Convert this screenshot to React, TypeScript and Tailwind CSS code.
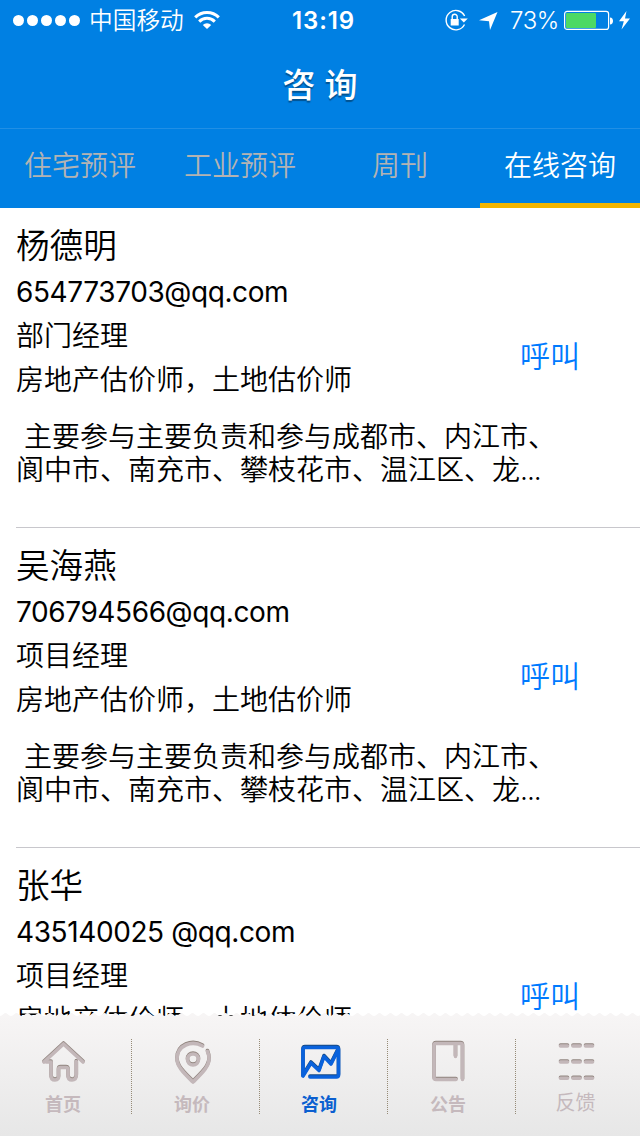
import React from 'react'

const tabs = ["住宅预评", "工业预评", "周刊", "在线咨询"]

const people = [
  {
    name: "杨德明",
    email: "654773703@qq.com",
    job: "部门经理",
    about: [" 主要参与主要负责和参与成都市、内江市、", "阆中市、南充市、攀枝花市、温江区、龙"],
  },
  {
    name: "吴海燕",
    email: "706794566@qq.com",
    job: "项目经理",
    about: [" 主要参与主要负责和参与成都市、内江市、", "阆中市、南充市、攀枝花市、温江区、龙"],
  },
  { name: "张华", email: "435140025 @qq.com", job: "项目经理" },
]

const StatusBar = () => {
  return (
    <div className="flex h-10 items-center pl-[13px] text-white">
      <div className="flex gap-[3px]">
        {[1, 2, 3, 4, 5].map((dot) => (
          <span key={dot} className="h-[11px] w-[11px] rounded-full bg-white" />
        ))}
      </div>
      <span className="ml-[9px] w-[97px] pt-[2px] whitespace-nowrap text-[23.7px] leading-10 font-[350]">中国移动</span>
      <svg className="ml-2 h-[20px] w-[26px]" viewBox="0 0 26 20" fill="none" stroke="#fff" strokeWidth="3">
        <path d="M1.2 7.4A16.5 16.5 0 0 1 24.8 7.4" />
        <path d="M5.2 11.6A11 11 0 0 1 20.8 11.6" />
        <path d="M13 19L8.8 14.9A6 6 0 0 1 17.2 14.9Z" fill="#fff" stroke="none" />
      </svg>
      <span className="ml-[72px] w-[70px] pt-0.5 text-[24px] leading-10 font-semibold tracking-[0.9px]">13:19</span>
      <svg className="ml-[82px] h-[24px] w-[26px]" viewBox="0 0 26 24" fill="none" stroke="#fff" strokeWidth="1.4">
        <path d="M20.5 16.5A9.7 9.7 0 1 1 20.6 8" />
        <path d="M15.8 10.5H23.8L19.8 14.5Z" fill="#fff" stroke="none" />
        <rect x="6.7" y="11" width="8" height="6.5" fill="#fff" stroke="none" />
        <path d="M8.2 11V8.7a2.5 2.5 0 0 1 5 0V11" />
      </svg>
      <svg className="mt-px ml-[9px] h-[18px] w-[19px]" viewBox="0 0 19 18" fill="#fff">
        <path d="M18.5 0L11 18L10 9.2L0 8.2Z" />
      </svg>
      <span className="ml-[12px] w-[49px] pt-0.5 text-2xl leading-10 font-[350] tracking-[-0.4px]">73%</span>
      <svg className="ml-[5px] h-[20px] w-[67px]" viewBox="0 0 67 20">
        <rect x="0.6" y="1.4" width="44" height="18" rx="2.5" fill="none" stroke="#fff" strokeWidth="1.2" />
        <rect x="2" y="3" width="30" height="15" rx="1" fill="#4cd964" />
        <path d="M46 7.5c4 0 4 7 0 7z" fill="#fff" />
        <path d="M62.5 1L55 11.2H59.8L57.5 19.5L66 8.6H61Z" fill="#fff" />
      </svg>
    </div>
  )
}

const Icon = ({ index }: { index: number }) => {
  return (
    <svg
      className={index === 2 ? "h-12 w-full drop-shadow-[0_-0.7px_0_#174a83]" : "h-12 w-full drop-shadow-[0_-0.8px_0_#91857f]"}
      viewBox={index === 0 ? "0 0 131 48" : index === 4 ? "4 0 124 48" : "4 0 127 48"}
      fill="none" strokeLinecap="round" strokeLinejoin="round" strokeWidth="3.6"
      stroke={index === 2 ? "#0a62dc" : "#c3b7b9"}>
      {index === 0 && <path d="M44 26L63.5 8L83 26M46 26H51V39.5Q51 44 55 44T58.5 39.5V33.5Q58.5 31.5 60.5 31.5H66Q68 31.5 68 33.5V39.5Q68 44 72 44T76.3 39.5V25.5" />}
      {index === 1 && (
        <>
          <path d="M74.5 10C64 4 49 9 49 23C49 31 57 38 65 46C73 38 81 31 81 23Q81 19 79.5 15.5" />
          <circle cx="65" cy="23.5" r="5.5" />
        </>
      )}
      {index === 2 && <path d="M47 40V13.5Q47 11.5 49 11.5H80.5Q82.5 11.5 82.5 13.5V39Q82.5 41 80.5 41H54M47 40L55 27L63 34.5L68 20.5L75 28L82 14" />}
      {index === 3 && <path d="M72 43.5H52Q50 43.5 50 41.5V9.5Q50 7.5 52 7.5H76.5Q78.5 7.5 78.5 9.5V43.5M71.5 9V20.5" />}
      {index === 4 && <path d="M48.5 10H55.5M61 10H68M73.5 10H80.5M48.5 26H55.5M61 26H68M73.5 26H80.5M48.5 42.3H55.5M61 42.3H68M73.5 42.3H80.5" />}
    </svg>
  )
}

const Footer = () => {
  return (
    <footer className="relative -mt-1 flex h-[124px] shrink-0 flex-col">
      {/* scalloped paper edge */}
      <svg className="h-1 w-full shrink-0" viewBox="0 0 640 4">
        <defs>
          <pattern id="edge" width="11" height="4" patternUnits="userSpaceOnUse">
            <path d="M0 4Q1.5 4 3.5 2Q5.5 0 7.5 2Q9.5 4 11 4Z" fill="#f7f5f5" />
          </pattern>
        </defs>
        <rect width="640" height="4" fill="url(#edge)" />
      </svg>
      <div className="flex flex-1 bg-linear-to-b from-[#f7f5f5] to-[#e7e7e7] pt-5">
        {["首页", "询价", "咨询", "公告", "反馈"].map((label, index) => (
          <div key={label} className={index === 0 ? "flex w-33 shrink-0" : index === 4 ? "flex w-31 shrink-0" : "flex w-32 shrink-0"}>
            <div className="flex flex-1 flex-col">
              <Icon index={index} />
              <span className={index === 4
                ? "pr-[5px] text-center text-[20px] leading-[38px] text-[#c5b9bd]"
                : index === 2
                  ? "pt-px pr-[9px] text-center text-[18px] leading-10 font-bold text-[#0b5fd0]"
                  : index === 0
                    ? "pt-px pr-[5px] text-center text-[18px] leading-10 font-bold text-[#c5b9bd]"
                    : "pt-px pr-[7px] text-center text-[18px] leading-10 font-bold text-[#c5b9bd]"}>{label}</span>
            </div>
            {index < 4 && <span className="mt-[3px] h-[75px] border-l border-dotted border-[#968b77]" />}
          </div>
        ))}
      </div>
    </footer>
  )
}

const App = () => {
  return (
    <div className="flex h-[1136px] w-[640px] flex-col overflow-hidden bg-white font-['Inter','Noto_Sans_CJK_SC',sans-serif] text-black">
      <header className="h-52 shrink-0 bg-[#0080e3]">
        <StatusBar />
        <h1 className="h-[88px] pt-[5px] text-center text-[33px] leading-[80px] font-medium text-white [text-shadow:0_2px_1px_#005291]">咨 询</h1>
        <nav className="flex h-20 border-t border-[#218fe5]">
          {tabs.map((tab, index) => (
            <div key={tab} className={index === 3
              ? "w-40 border-b-5 border-[#f2b500] text-center text-[28px] leading-[75px] font-[350] text-white"
              : "w-40 text-center text-[28px] leading-[75px] font-[350] text-[#b3b3b3]"}>{tab}</div>
          ))}
        </nav>
      </header>
      <main className="min-h-0 flex-1 overflow-hidden">
        {people.map((person) => (
          <div key={person.name} className="ml-4 flex h-80 border-b border-[#c8c7cc] pt-4 text-[28px]">
            <div className="w-[504px]">
              <h2 className="h-[46px] text-[33.6px] leading-[43px] font-[350]">{person.name}</h2>
              <p className="h-11 leading-11 tracking-[-0.4px] whitespace-nowrap">{person.email}</p>
              <p className="h-11 leading-[45px] font-[350]">{person.job}</p>
              <p className="h-11 leading-[45px] font-[350]">房地产估价师，土地估价师</p>
              {person.about && (
                <p className="mt-[19px] leading-[33px] font-[350] whitespace-pre">
                  {person.about[0]}<br />{person.about[1]}<span className="tracking-[-1px]">...</span>
                </p>
              )}
            </div>
            <button className="mt-[110px] h-11 text-[30px] leading-11 font-[350] text-[#007aff]">呼叫</button>
          </div>
        ))}
      </main>
      <Footer />
    </div>
  )
}

export default App
